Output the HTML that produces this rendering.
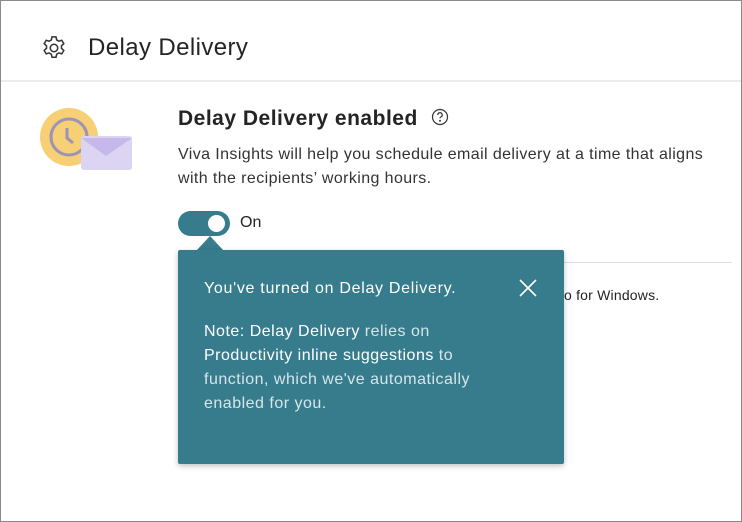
<!DOCTYPE html>
<html><head><style>
body{margin:0;width:742px;height:522px;background:#fff;font-family:"Liberation Sans",sans-serif;overflow:hidden;position:relative}
.frame{position:absolute;left:0;top:0;width:740px;height:520px;border:1px solid #8a8a8a}
.t{position:absolute;white-space:nowrap;color:#242424}
</style></head><body>
<div class="frame"></div>
<svg style="position:absolute;left:40px;top:34px" width="28" height="28" viewBox="0 0 24 24" fill="none" stroke="#333" stroke-width="1.3"><circle cx="12" cy="12" r="3.2"/><path d="M10.3 2.5h3.4l.6 2.6 1.9 1.1 2.5-.8 1.7 2.9-2 1.8v2.2l2 1.8-1.7 2.9-2.5-.8-1.9 1.1-.6 2.6h-3.4l-.6-2.6-1.9-1.1-2.5.8-1.7-2.9 2-1.8v-2.2l-2-1.8 1.7-2.9 2.5.8 1.9-1.1z"/></svg>
<div class="t" style="left:88px;top:34px;font-size:24px;letter-spacing:0.4px">Delay Delivery</div>
<div style="position:absolute;left:1px;top:80px;width:740px;height:2px;background:#ececec"></div>
<svg style="position:absolute;left:40px;top:108px" width="95" height="65"><circle cx="29" cy="29" r="29" fill="#f7cf74"/><circle cx="29" cy="29" r="18" fill="none" stroke="#9c93b8" stroke-width="3"/><path d="M27 20v10l6 5" fill="none" stroke="#9c93b8" stroke-width="3"/><rect x="41" y="28" width="51" height="34" rx="3" fill="#dcd4f3"/><path d="M41 30l25 18 26-18" fill="#c6b9ea"/></svg>
<div class="t" style="left:178px;top:107px;font-size:21px;font-weight:bold;letter-spacing:0.5px">Delay Delivery enabled</div>
<svg style="position:absolute;left:431px;top:108px" width="18" height="18" viewBox="0 0 18 18" fill="none" stroke="#333" stroke-width="1.2"><circle cx="9" cy="9" r="7.5"/><path d="M6.8 7a2.2 2.2 0 1 1 3 2c-.6.3-.8.7-.8 1.3"/><circle cx="9" cy="12.8" r=".4" fill="#333"/></svg>
<div class="t" style="left:178px;top:143px;font-size:16px;line-height:24px;color:#333;letter-spacing:0.4px">Viva Insights will help you schedule email delivery at a time that aligns<br>with the recipients’ working hours.</div>
<div style="position:absolute;left:178px;top:211px;width:52px;height:25px;border-radius:13px;background:#367c8c"></div>
<div style="position:absolute;left:208px;top:215px;width:17px;height:17px;border-radius:50%;background:#fff"></div>
<div class="t" style="left:240px;top:214px;font-size:16px">On</div>
<div style="position:absolute;left:564px;top:262px;width:168px;height:1px;background:#ddd"></div>
<div class="t" style="left:564px;top:287px;font-size:14px;letter-spacing:0.2px">o for Windows.</div>
<div style="position:absolute;left:196px;top:236px;width:0;height:0;border-left:14px solid transparent;border-right:14px solid transparent;border-bottom:15px solid #367c8c"></div>
<div style="position:absolute;left:178px;top:250px;width:386px;height:214px;background:#367c8c;border-radius:2px;box-shadow:0 2px 6px rgba(0,0,0,.25)"></div>
<div class="t" style="left:204px;top:280px;font-size:16px;color:#fff;letter-spacing:0.7px">You've turned on Delay Delivery.</div>
<svg style="position:absolute;left:518px;top:278px" width="20" height="20" stroke="#fff" stroke-width="1.6"><path d="M2 2l16 16M18 2L2 18"/></svg>
<div class="t" style="left:204px;top:320px;font-size:16px;line-height:24px;color:#d6e6ea;letter-spacing:0.5px"><span style="color:#fff">Note: Delay Delivery</span> relies on<br><span style="color:#fff">Productivity inline suggestions</span> to<br>function, which we've automatically<br>enabled for you.</div>
</body></html>
